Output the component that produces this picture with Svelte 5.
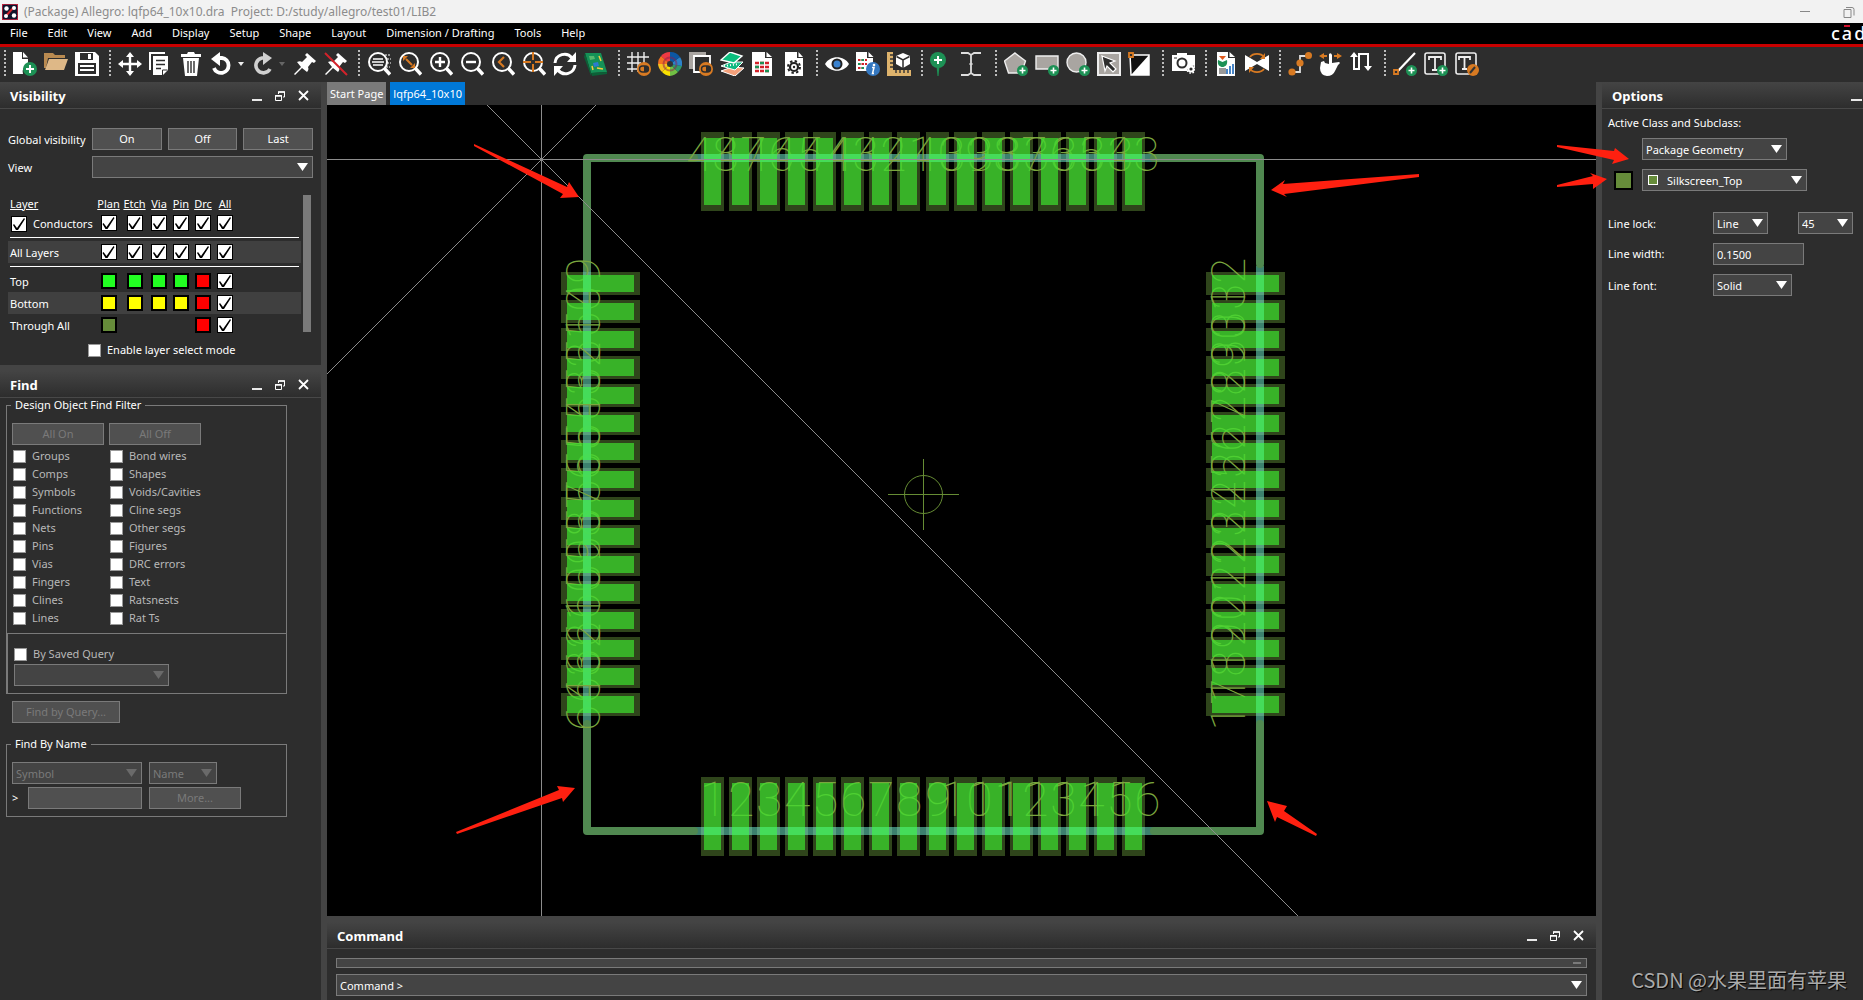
<script lang="ts">
    const menus = ['File', 'Edit', 'View', 'Add', 'Display', 'Setup', 'Shape', 'Layout', 'Dimension / Drafting', 'Tools', 'Help'];

    // shared icon fragments
    const plus = '<circle cx="18.500" cy="18.500" r="5.500" fill="#1d9155"/><path d="M18.500 15.500v6M15.500 18.500h6" stroke="#fff" stroke-width="1.600"/>';
    const lens = '<circle cx="11" cy="10" r="9" fill="none" stroke="#fff" stroke-width="2"/><path d="M17.500 16.500l5.500 6" stroke="#fff" stroke-width="3.400"/>';
    const doc = '<path d="M3 0h12v6h6v18H3z" fill="#fff"/><path d="M16.500 0v5H21z" fill="#fff"/>';
    const pushpin = '<path d="M14 1l9 8-2 2-2-1-4 5c1 2 0 4-1 5l-5-4-7 7-1-1 7-7-4-5c2-1 4-1 5 0l5-5-2-2z" fill="#fff"/>';
    const toggle = '<circle cx="17" cy="17" r="7" fill="#d87a22"/><rect x="12.500" y="14" width="9" height="6" rx="3" fill="none" stroke="#2d2d2d" stroke-width="1.400"/><path d="M17 14h2a3 3 0 0 1 0 6h-2z" fill="#2d2d2d"/>';

    const icons: Record<string, string> = {
        'New': '<path d="M0 0h9v7h6v5a8 8 0 0 0-5 10H0z" fill="#fff"/><path d="M10 0v5.500h5z" fill="#fff"/><circle cx="17" cy="17" r="7" fill="#1d9155"/><path d="M17 13v8M13 17h8" stroke="#fff" stroke-width="2"/>',
        'Open': '<path d="M0 1h9l2 2h10v3H4L2 16H0z" fill="#b98a50"/><path d="M5 7h19l-4 11H1z" fill="#deb887"/>',
        'Save': '<path d="M0 0h20l4 4v20H0z" fill="#fff"/><path d="M5 1h13v7H5z" fill="#2d2d2d"/><path d="M13 2h3v5h-3z" fill="#fff"/><path d="M3 11h18v11H3z" fill="#2d2d2d"/><path d="M5 14h14M5 18h14" stroke="#fff" stroke-width="2"/>',
        'Move': '<path d="M12 2v20M2 12h20" stroke="#fff" stroke-width="2.400"/><path d="M12 0l4 5H8zM12 24l4-5H8zM0 12l5-4v8zM24 12l-5-4v8z" fill="#fff"/>',
        'Copy': '<path d="M1 18V1h15" fill="none" stroke="#fff" stroke-width="2"/><path d="M4 4h15v14l-5 5H4z" fill="#fff"/><path d="M7 8.500h9M7 12.500h9M7 16.500h5" stroke="#2d2d2d" stroke-width="1.600"/><path d="M13.500 23v-5h5" fill="none" stroke="#2d2d2d"/>',
        'Delete': '<path d="M1 2h6l1-2h6l1 2h6v3H1zM3 6h16l-2 18H5z" fill="#fff"/><path d="M8 9v12M11 9v12M14 9v12" stroke="#2d2d2d" stroke-width="1.400"/>',
        'Undo': '<path d="M7 6h4a7.500 7.500 0 1 1-8 10" fill="none" stroke="#fff" stroke-width="3.800"/><path d="M0 7l9-7v14z" fill="#fff"/>',
        'Redo': '<path d="M13 6h-3a7.500 7.500 0 1 0 8 11" fill="none" stroke="#d0d0d0" stroke-width="3.600"/><path d="M20 6l-9-6v13z" fill="#d0d0d0"/>',
        'Fix': pushpin,
        'Unfix': pushpin + '<path d="M1 1l22 22" stroke="#d3222a" stroke-width="2"/>',
        'Zoom Points': lens + '<path d="M6 7h10M5 10h12M6 13h10" stroke="#fff" stroke-width="1.600"/><path d="M18 3h5M20 7h4M20 11h4M19 15h4" stroke="#fff" stroke-dasharray="2 1"/>',
        'Zoom Fit': lens + '<path d="M8 7l6 6" stroke="#d87a22" stroke-width="2"/><path d="M5 4h5l-5 5zM17 16h-5l5-5z" fill="#d87a22"/>',
        'Zoom In': lens + '<path d="M11 5v10M6 10h10" stroke="#fff" stroke-width="2.400"/>',
        'Zoom Out': lens + '<path d="M6 10h10" stroke="#fff" stroke-width="2.400"/>',
        'Zoom Previous': lens + '<path d="M13 5l-5 5 5 5" fill="none" stroke="#d87a22" stroke-width="2.200"/>',
        'Zoom Selection': lens + '<path d="M11 0v8M11 12v8M1 10h8M13 10h8" stroke="#d87a22" stroke-width="2"/>',
        'Redraw': '<path d="M2 11a9.500 9.500 0 0 1 17-5M22 13a9.500 9.500 0 0 1-17 5" fill="none" stroke="#fff" stroke-width="3"/><path d="M23 0v10H14zM1 24V14h9z" fill="#fff"/>',
        '3D Canvas': '<path d="M1 1l16 0 6 19-16 1z" fill="#159157"/><path d="M1 1l6 20v3L0 5zM7 21l16-1v2L8 24z" fill="#0b6137"/><path d="M5 4l5 0 1 3-5 1z" fill="#58b86e"/><path d="M9 11l5-1 1 4-5 1z" fill="#2a7bd0"/><path d="M15 4l2 5M13 16l6 1M8 14l1 4" stroke="#f3cd42" stroke-width="1.500"/>',
        'Grid Toggle': '<path d="M5 0v20M11 0v20M17 0v12M0 5h22M0 11h14M0 17h11" stroke="#eee" stroke-width="1.400"/>' + toggle,
        'Color': [['#f6c01e', 'M12 12L0 12A12 12 0 0 0 4 20z'], ['#f9e100', 'M12 12L4 20A12 12 0 0 0 12 24z'], ['#71bf44', 'M12 12V24A12 12 0 0 0 20 20z'], ['#2d9a6a', 'M12 12L20 20A12 12 0 0 0 24 14z'], ['#2c82c9', 'M12 12L24 14A12 12 0 0 0 22 5z'], ['#0b57a4', 'M12 12L22 5A12 12 0 0 0 12 0z'], ['#ee3a43', 'M12 12V0A12 12 0 0 0 3 4z'], ['#f37021', 'M12 12L3 4A12 12 0 0 0 0 12z']]
            .map(([c, d]) => `<path d="${d}" fill="${c}"/>`).join('') + '<circle cx="12" cy="12" r="6.500" fill="none" stroke="#8a1e50" stroke-opacity=".5" stroke-width="2"/><circle cx="12" cy="12" r="3" fill="#333"/>',
        'Shadow Toggle': '<path d="M0 0h17v4H5v13H0z" fill="#a9a5a1"/><path d="M5 4h16v16H5z" fill="#2d2d2d" stroke="#fff" stroke-width="1.800"/>' + toggle,
        'Layers': '<path d="M1 19l11-4 12 1-9 8z" fill="#f4a07a" stroke="#fff"/><path d="M1 14l10-4 12 0-8 8z" fill="#10b981" stroke="#fff"/><path d="M1 8l9-8 12 4-8 7z" fill="#0bbf7e" stroke="#fff" stroke-width="1.400"/><path d="M4 14l15-2" stroke="#fff" stroke-dasharray="1 2" stroke-width="2"/>',
        'Cross Section': '<path d="M1 0h13v6h7v18H1z" fill="#fff"/><path d="M15.500 0v5H21z" fill="#fff"/><path d="M4 11h14M4 15h14M4 19h14" stroke="#d3222a" stroke-width="2.400" stroke-dasharray="4 1"/><path d="M9 11h4M4 15h4M14 19h4" stroke="#1d9155" stroke-width="2.400"/>',
        'Constraints': doc + '<circle cx="12" cy="15" r="4" fill="none" stroke="#222" stroke-width="2.200"/><circle cx="12" cy="15" r="6" fill="none" stroke="#222" stroke-width="2" stroke-dasharray="2.400 2.300"/><circle cx="12" cy="15" r="1.200" fill="#222"/>',
        'Show Element': '<path d="M0 12C5 3 19 3 24 12 19 21 5 21 0 12z" fill="#fff"/><circle cx="12" cy="12" r="5.500" fill="#222"/><circle cx="12" cy="12" r="3.500" fill="#3a82cf"/>',
        'Reports': '<path d="M0 0h11v6h6v13H0z" fill="#fff"/><path d="M12.500 0v5h5z" fill="#fff"/><path d="M2 8h9M2 12h9M2 16h7" stroke="#d3222a" stroke-width="2.200" stroke-dasharray="2.500 1"/><path d="M5.500 8H8M2 12h2.500M5.500 16H8" stroke="#1d9155" stroke-width="2.200"/><circle cx="17" cy="17" r="7" fill="#3578c0"/><circle cx="18" cy="13" r="1.300" fill="#fff"/><path d="M16 15.500h2l-1.500 6h1.500" fill="none" stroke="#fff" stroke-width="1.500"/>',
        'Measure': '<path d="M0 0h6v18h18v6H0z" fill="#deb36c"/><path d="M3 3h3M3 7h3M3 11h3M3 15h3M9 18v3M13 18v3M17 18v3M21 18v3" stroke="#333" stroke-width="1.400"/><path d="M16 1l7 3v8l-7 4-7-4V4z" fill="#fff"/><path d="M9.500 4.500L16 8l6.500-3.500M16 8v8" fill="none" stroke="#2d2d2d" stroke-width="1.500"/>',
        'Place Manual': '<circle cx="8" cy="8" r="8" fill="#1d9155"/><path d="M6.500 14h3L8.500 24h-1z" fill="#1d9155"/><path d="M8 4v8M4 8h8" stroke="#fff" stroke-width="2"/>',
        'Dimension': '<path d="M0 1h7l3 2 3-2h7M0 23h7l3-2 3 2h7M10 3v18" fill="none" stroke="#ddd" stroke-width="1.800"/><path d="M8 12h4" stroke="#ddd"/>',
        'Shape Polygon': '<path d="M11 1l10.500 8-4 12H4.500L.500 9z" fill="#a9a5a1" stroke="#eee" stroke-width="1.400"/>' + plus,
        'Shape Rectangle': '<path d="M1 4h22v13H1z" fill="#a9a5a1" stroke="#eee" stroke-width="1.400"/>' + plus,
        'Shape Circle': '<circle cx="10.500" cy="10.500" r="9.500" fill="#a9a5a1" stroke="#eee" stroke-width="1.400"/>' + plus,
        'Shape Select': '<path d="M1 1h22v22H1z" fill="#a9a5a1" stroke="#eee" stroke-width="2"/><path d="M5 4l13 5-5 2 6 6-3 3-6-6-2 5z" fill="#2d2d2d" stroke="#fff" stroke-width="1.200"/>',
        'Shape Edit': '<path d="M2 3h19v20H3z" fill="#111" stroke="#fff" stroke-width="1.500"/><path d="M21 3v20H3z" fill="#fff"/><path d="M1 1h4v4H1z" fill="#2d2d2d" stroke="#d87a22" stroke-width="1.800"/>',
        'Snapshot': '<path d="M1 3h5V1h10v2h8v11a6 6 0 0 0-8 5H1z" fill="#fff"/><circle cx="11" cy="11" r="4.500" fill="none" stroke="#2d2d2d" stroke-width="2"/><path d="M3 6h3" stroke="#2d2d2d"/><circle cx="20" cy="17" r="2.600" fill="none" stroke="#fff" stroke-width="2"/><circle cx="20" cy="17" r="4" fill="none" stroke="#fff" stroke-width="1.600" stroke-dasharray="1.600 1.500"/>',
        'Drill Report': '<path d="M3 0h11v6h7v18H3z" fill="#fff"/><path d="M15.500 0v5H21z" fill="#fff"/><path d="M5 4h7l-3.500 4z" fill="#e0581b"/><path d="M4 8l4.500 2L13 8c1 5-2 7-4.500 7S3 13 4 8z" fill="#1d9155"/><path d="M5 16h7v6H5z" fill="#999"/><path d="M13 22v-5M16 22v-8M19 22v-10" stroke="#3578c0" stroke-width="1.800"/>',
        'Mirror': '<path d="M0 3l12 7 12-7v16l-12-7-12 7z" fill="#fff"/><path d="M5 5a8 6 0 0 1 14 0M19 17a8 6 0 0 1-14 0" fill="none" stroke="#d87a22" stroke-width="1.800"/><path d="M20 1v6h-5zM4 21v-6h5z" fill="#d87a22"/>',
        'Add Connect': '<path d="M4 20h8V4h8" fill="none" stroke="#ddd" stroke-width="1.800"/><circle cx="4" cy="20" r="3.600" fill="#d87a22"/><circle cx="12" cy="11" r="3.600" fill="#d87a22"/><circle cx="20.500" cy="3.500" r="3.500" fill="#d87a22"/>',
        'Slide': '<path d="M10 2q2-2 3 1v8l7-1q2 1-1 3l-3 6q-2 5-8 5-7-1-7-8l1-6 3-1 1 2 4 1z" fill="#fff"/><path d="M0 4l5-3v6zM23 4l-5-3v6z" fill="#d87a22"/><path d="M4 4h4M15 4h4" stroke="#d87a22" stroke-width="1.800"/>',
        'Delay Tune': '<path d="M4 3v14h5V2h9v15" fill="none" stroke="#fff" stroke-width="2"/><path d="M4 0l4 5H0zM18 19l4-5h-8z" fill="#fff"/>',
        'Add Line': '<path d="M4 20L22 1" stroke="#fff" stroke-width="2.200"/><path d="M1 18h4v4H1z" fill="#2d2d2d" stroke="#d87a22" stroke-width="1.800"/>' + plus,
        'Add Text': '<rect x="1" y="1" width="20" height="21" rx="2" fill="none" stroke="#eee" stroke-width="1.600"/><path d="M5 8V5h12v3M11 5v13M8 18h6" fill="none" stroke="#eee" stroke-width="1.800"/>' + plus,
        'Edit Text': '<rect x="1" y="1" width="20" height="21" rx="2" fill="none" stroke="#eee" stroke-width="1.600"/><path d="M4 8V5h11v3M9.500 5v12M7 17h5" fill="none" stroke="#eee" stroke-width="1.800"/><circle cx="18" cy="18" r="6" fill="#d87a22"/><path d="M15 21l5-6" stroke="#333" stroke-width="2"/>',
    };

    const toolGroups = [
        ['New', 'Open', 'Save'],
        ['Move', 'Copy', 'Delete', 'Undo', 'Redo', 'Fix', 'Unfix'],
        ['Zoom Points', 'Zoom Fit', 'Zoom In', 'Zoom Out', 'Zoom Previous', 'Zoom Selection', 'Redraw', '3D Canvas'],
        ['Grid Toggle', 'Color', 'Shadow Toggle', 'Layers', 'Cross Section', 'Constraints'],
        ['Show Element', 'Reports', 'Measure'],
        ['Place Manual', 'Dimension'],
        ['Shape Polygon', 'Shape Rectangle', 'Shape Circle', 'Shape Select', 'Shape Edit'],
        ['Snapshot'],
        ['Drill Report', 'Mirror'],
        ['Add Connect', 'Slide', 'Delay Tune'],
        ['Add Line', 'Add Text', 'Edit Text'],
    ];

    const columns = ['Plan', 'Etch', 'Via', 'Pin', 'Drc'];
    const layers = [
        { name: 'Top', colors: ['#22ff22', '#22ff22', '#22ff22', '#22ff22', '#ff0000'] },
        { name: 'Bottom', colors: ['#ffff00', '#ffff00', '#ffff00', '#ffff00', '#ff0000'] },
        { name: 'Through All', colors: ['#668c3a', '', '', '', '#ff0000'] },
    ];

    const filters = [
        'Groups', 'Bond wires', 'Comps', 'Shapes', 'Symbols', 'Voids/Cavities', 'Functions', 'Cline segs', 'Nets', 'Other segs',
        'Pins', 'Figures', 'Vias', 'DRC errors', 'Fingers', 'Text', 'Clines', 'Ratsnests', 'Lines', 'Rat Ts',
    ];

    // LQFP64 footprint, 16 pads on each side
    const pitch = 421 / 15;
    const pads = Array.from({ length: 16 }, (_, i) => {
        const s = Math.round(i * pitch);
        return { s, bottom: i + 1, right: 32 - i, top: 48 - i, left: 49 + i };
    });
</script>

{#snippet windowButtons(title: string)}
    <div class="win-buttons">
        <button aria-label="Minimize {title}"><svg viewBox="0 0 12 12"><path d="M1 9h10v2H1z" fill="#e8e8e8" /></svg></button>
        <button aria-label="Float {title}">
            <svg viewBox="0 0 12 12"><path d="M4.500 4V2h6v5H9M1.500 5.500h6v5h-6z" fill="none" stroke="#fff" stroke-width="1" /><path d="M4 2h7M1 6h7" stroke="#fff" stroke-width="1.500" /></svg>
        </button>
        <button aria-label="Close {title}"><svg viewBox="0 0 12 12"><path d="M2 1l9 9M11 1l-9 9" stroke="#fff" stroke-width="1.800" /></svg></button>
    </div>
{/snippet}

{#snippet combo(label: string, value: string, cls: string, disabled: boolean)}
    <span class="combo {cls}" class:disabled>
        <select aria-label={label} {disabled}><option>{value}</option></select>
    </span>
{/snippet}

<div class="app">
    <header class="titlebar">
        <svg class="app-icon" viewBox="0 0 16 16">
            <rect width="16" height="16" rx="2" fill="#10142c" />
            <path d="M0 14V2q0-2 2-2h12q2 0 2 2v12q0 2-2 2H2q-2 0-2-2z" fill="none" stroke="#c8203c" stroke-width="1.500" />
            <path d="M3 13l9-10" stroke="#d3222a" stroke-width="2" />
            <circle cx="4.500" cy="4.500" r="2.200" fill="#fff" /><circle cx="12" cy="4" r="2" fill="#fff" />
            <circle cx="4" cy="12" r="2" fill="#fff" /><circle cx="12" cy="11.500" r="2.200" fill="#fff" />
        </svg>
        <span class="title">(Package) Allegro: lqfp64_10x10.dra&nbsp; Project: D:/study/allegro/test01/LIB2</span>
        <button aria-label="Minimize"><svg viewBox="0 0 12 12"><path d="M1 5.500h10" stroke="#888" /></svg></button>
        <button aria-label="Restore"><svg viewBox="0 0 12 12"><path d="M1 3.500h7v8H1zM3 1.500h6q2 0 2 2v6" fill="none" stroke="#888" /></svg></button>
    </header>

    <nav class="menubar">
        {#each menus as menu}
            <button>{menu}</button>
        {/each}
        <span class="logo"><span>c</span><span class="macron">a</span><span>d</span></span>
    </nav>

    <div class="toolbar">
        {#each toolGroups as group}
            <div class="group">
                {#each group as name}
                    <button aria-label={name} class:has-menu={name === 'Undo' || name === 'Redo'} class:dim={name === 'Redo'}>
                        <svg viewBox="0 0 24 24">{@html icons[name]}</svg>
                    </button>
                {/each}
            </div>
        {/each}
    </div>

    <main>
        <aside class="dock">
            <section class="visibility">
                <h2>Visibility {@render windowButtons('Visibility')}</h2>
                <div class="form">
                    <span>Global visibility</span>
                    <div class="buttons"><button class="btn">On</button><button class="btn">Off</button><button class="btn">Last</button></div>
                    <span>View</span>
                    {@render combo('View', '', '', false)}
                </div>
                <div class="layer-list">
                    <table>
                        <colgroup><col class="c-name" /><col class="c-plan" /><col class="c-etch" /><col class="c" /><col class="c" /><col class="c" /><col class="c" /><col /></colgroup>
                        <thead>
                            <tr><th class="name">Layer</th>{#each columns as c}<th>{c}</th>{/each}<th>All</th><th></th></tr>
                        </thead>
                        <tbody>
                            <tr>
                                <td class="name"><label><input type="checkbox" class="tick" checked /> Conductors</label></td>
                                {#each [...columns, 'All'] as c}<td><input type="checkbox" class="tick" aria-label="Conductors {c}" checked /></td>{/each}
                                <td></td>
                            </tr>
                            <tr class="rule"><td colspan="8"><hr /></td></tr>
                            <tr class="alt">
                                <td class="name">All Layers</td>
                                {#each [...columns, 'All'] as c}<td><input type="checkbox" class="tick" aria-label="All layers {c}" checked /></td>{/each}
                                <td></td>
                            </tr>
                            <tr class="rule"><td colspan="8"><hr /></td></tr>
                            {#each layers as layer, i}
                                <tr class:alt={i === 1}>
                                    <td class="name">{layer.name}</td>
                                    {#each layer.colors as color, j}
                                        <td>{#if color}<button class="swatch" aria-label="{layer.name} {columns[j]}" style:background={color}></button>{/if}</td>
                                    {/each}
                                    <td><input type="checkbox" class="tick" aria-label="{layer.name} All" checked /></td>
                                    <td></td>
                                </tr>
                            {/each}
                        </tbody>
                    </table>
                    <div class="scrollbar"></div>
                </div>
                <label class="select-mode"><input type="checkbox" class="box" /> Enable layer select mode</label>
            </section>

            <section class="find">
                <h2>Find {@render windowButtons('Find')}</h2>
                <fieldset class="filter">
                    <legend>Design Object Find Filter</legend>
                    <div class="row"><button class="btn wide" disabled>All On</button><button class="btn wide" disabled>All Off</button></div>
                    <div class="checks">
                        {#each filters as f}
                            <label><input type="checkbox" class="box" /> {f}</label>
                        {/each}
                    </div>
                    <div class="saved">
                        <label><input type="checkbox" class="box" /> By Saved Query</label>
                        {@render combo('Saved query', '', 'w155', true)}
                    </div>
                </fieldset>
                <button class="btn query" disabled>Find by Query...</button>
                <fieldset class="by-name">
                    <legend>Find By Name</legend>
                    <div class="row">{@render combo('Object type', 'Symbol', 'w130', true)}{@render combo('Match by', 'Name', 'w68', true)}</div>
                    <div class="row"><label class="prompt" for="find-name">&gt;</label><input id="find-name" type="text" disabled /><button class="btn wide" disabled>More...</button></div>
                </fieldset>
            </section>
        </aside>

        <div class="center">
            <div class="tabs"><button>Start Page</button><button class="active">lqfp64_10x10</button></div>
            <svg class="canvas" viewBox="327 105 1269 811" preserveAspectRatio="xMidYMid slice">
                <!-- outline where it runs under the pads -->
                <path d="M694 158H1154M694 831H1154M587 266V724M1260 266V724" stroke="#3c806e" stroke-width="8" />
                <!-- silkscreen corners -->
                <path d="M587 268V158H694M1154 158H1260V264M1260 724V831H1154M694 831H587V724" class="silk" />
                <!-- solder mask margins -->
                {#each pads as { s }}
                    {#each [132, 777] as y}
                        <rect x={701 + s} {y} width="23" height="79" class="mask" />
                        <rect x={701 + s} y={y === 132 ? 154 : 827} width="23" height="8" class="mask-hit" />
                    {/each}
                    {#each [561, 1206] as x}
                        <rect {x} y={272 + s} width="79" height="23" class="mask" />
                        <rect x={x === 561 ? 583 : 1256} y={272 + s} width="8" height="23" class="mask-hit" />
                    {/each}
                {/each}
                <!-- pin numbers, dimmed by the copper above them -->
                <g class="pins">
                    {#each pads as { s, top, bottom, left, right }}
                        <text x={686 + s} y="171">{top}</text>
                        <text x={(bottom > 9 ? 687 : 700) + s} y="816">{bottom}</text>
                        <text transform="translate(600 {310 + s}) rotate(-90)">{left}</text>
                        <text transform="translate(1245 {310 + s}) rotate(-90)">{right}</text>
                    {/each}
                </g>
                <!-- copper pads -->
                {#each pads as { s }}
                    {#each [138, 783] as y}
                        <rect x={704 + s} {y} width="17" height="67" class="pad" />
                        <rect x={704 + s} y={y === 138 ? 154 : 827} width="17" height="8" class="pad-hit" />
                    {/each}
                    {#each [567, 1212] as x}
                        <rect {x} y={275 + s} width="67" height="17" class="pad" />
                        <rect x={x === 567 ? 583 : 1256} y={275 + s} width="8" height="17" class="pad-hit" />
                    {/each}
                {/each}
                <!-- origin guides -->
                <g class="guides">
                    <path d="M541.500 105V916M327 159.500H1596" />
                    <path d="M487 105L1298 916M596 105L327 374" />
                </g>
                <g class="mark"><circle cx="923.500" cy="494.500" r="19" /><path d="M888 494.500H959M923.500 459V530" /></g>
                <g class="arrow">
                    <path d="M474 144L567 187 569 182 579 197 560 198 563 194 474 146z" />
                    <path d="M1271 190L1285 180 1283 184 1419 174 1419 177 1284 194 1287 197z" />
                    <path d="M575 788L557 786 559 790 456 832 457 834 562 798 563 802z" />
                    <path d="M1267 801L1287 806 1284 811 1317 834 1316 836 1277 817 1275 822z" />
                </g>
            </svg>
            <section class="command">
                <h2>Command {@render windowButtons('Command')}</h2>
                <div class="log"></div>
                {@render combo('Command line', 'Command >', '', false)}
            </section>
        </div>

        <aside class="options">
            <h2>Options <button class="min" aria-label="Minimize Options"><svg viewBox="0 0 12 12"><path d="M0 9h11v2H0z" fill="#e8e8e8" /></svg></button></h2>
            <p>Active Class and Subclass:</p>
            <div class="class-row">{@render combo('Active class', 'Package Geometry', 'w145', false)}</div>
            <div class="class-row">
                <button class="swatch big" aria-label="Subclass color"></button>
                {@render combo('Active subclass', 'Silkscreen_Top', 'w165 with-chip', false)}
            </div>
            <div class="line-form">
                <span>Line lock:</span>
                <div class="pair">{@render combo('Line lock', 'Line', 'w55', false)}{@render combo('Lock angle', '45', 'w55', false)}</div>
                <label for="line-width">Line width:</label>
                <input id="line-width" type="text" value="0.1500" />
                <span>Line font:</span>
                {@render combo('Line font', 'Solid', 'w79', false)}
            </div>
            <svg class="notes arrow" viewBox="0 0 80 50">
                <path d="M1 5L58 11 59 8 73 19 56 24 58 20 1 7z" />
                <path d="M1 45L37 36 34 33 51 39 37 49 37 44 1 47z" />
            </svg>
        </aside>
    </main>

    <div class="watermark">CSDN @水果里面有苹果</div>
</div>

<style>
    :global(body) {
        margin: 0;
        background: #2d2d2d;
    }

    .app {
        position: relative;
        display: flex;
        flex-direction: column;
        height: 100vh;
        overflow: hidden;
        background: #2d2d2d;
        color: #fff;
        font: 11px/16px "Noto Sans", "Open Sans", sans-serif;
    }

    button, select, input {
        box-sizing: border-box;
        margin: 0;
        padding: 0;
        border: 0;
        border-radius: 0;
        background: none;
        color: inherit;
        font: inherit;
        appearance: none;
    }

    svg {
        display: block;
    }

    .titlebar {
        flex: none;
        display: flex;
        align-items: center;
        height: 23px;
        padding: 0 8px 0 2px;
        background: #f2f2f2;
        color: #8c8c8c;
        font-size: 12px;
    }

    .titlebar .title {
        flex: 1;
        margin-left: 6px;
    }

    .titlebar svg {
        width: 12px;
        height: 12px;
    }

    .titlebar .app-icon {
        width: 16px;
        height: 16px;
    }

    .titlebar button + button {
        margin-left: 32px;
    }

    .menubar {
        flex: none;
        display: flex;
        align-items: center;
        height: 21px;
        background: #000;
        border-bottom: 3px solid #c80000;
    }

    .menubar button {
        height: 21px;
        padding: 0 10px 1px;
    }

    .logo {
        display: flex;
        gap: 2px;
        width: 32px;
        margin-left: auto;
        overflow: hidden;
        font-size: 18px;
        font-weight: 500;
        line-height: 21px;
    }

    .macron {
        position: relative;
    }

    .macron::before {
        content: "";
        position: absolute;
        left: 2px;
        top: 2px;
        width: 6px;
        height: 2px;
        background: #d0102c;
    }

    .toolbar {
        flex: none;
        display: flex;
        height: 35px;
        padding-left: 1px;
    }

    .group {
        display: flex;
        align-items: flex-start;
        padding-top: 5px;
    }

    .group::before {
        content: "";
        width: 2px;
        height: 26px;
        margin: -2px 7px 0 3px;
        background: repeating-linear-gradient(#bbb 0 2px, transparent 2px 4px);
    }

    .group button {
        display: flex;
        align-items: center;
        width: 31px;
    }

    .group svg {
        flex: none;
        width: 24px;
        height: 24px;
    }

    .group .has-menu {
        width: 41px;
    }

    .has-menu::after {
        content: "";
        margin-left: 3px;
        border: 3px solid transparent;
        border-top: 4px solid #eee;
        border-bottom: 0;
    }

    .has-menu.dim::after {
        border-top-color: #666;
    }

    main {
        flex: 1;
        min-height: 0;
        display: grid;
        grid-template-columns: 327px minmax(0, 1fr) 267px;
    }

    h2 {
        display: flex;
        align-items: center;
        justify-content: space-between;
        box-sizing: border-box;
        height: 27px;
        margin: 0;
        padding: 2px 12px 0 10px;
        background: linear-gradient(#444, #2d2d2d);
        border-bottom: 1px solid #484848;
        font-size: 13px;
        font-weight: 700;
    }

    .win-buttons {
        display: flex;
        gap: 11px;
    }

    .win-buttons svg, .min svg {
        width: 12px;
        height: 12px;
    }

    .dock {
        display: flex;
        flex-direction: column;
        border-right: 6px solid #444;
    }

    .btn {
        height: 22px;
        background: #505050;
        border: 1px solid #7a7a7a;
    }

    .btn:disabled {
        color: #7a7a7a;
    }

    .btn.wide {
        width: 92px;
    }

    .combo {
        position: relative;
        display: block;
        height: 22px;
    }

    .combo select {
        display: block;
        width: 100%;
        height: 22px;
        padding: 1px 20px 0 3px;
        background: #444;
        border: 1px solid #7a7a7a;
        opacity: 1;
    }

    .combo::after {
        content: "";
        position: absolute;
        right: 5px;
        top: 7px;
        width: 11px;
        height: 8px;
        background: #fff;
        clip-path: polygon(0 0, 100% 0, 50% 100%);
        pointer-events: none;
    }

    .combo.disabled {
        color: #7a7a7a;
    }

    .combo.disabled::after {
        background: #6a6a6a;
    }

    .w55 { width: 55px; }
    .w68 { width: 68px; }
    .w79 { width: 79px; }
    .w130 { width: 130px; }
    .w145 { width: 145px; }
    .w155 { width: 155px; }
    .w165 { width: 165px; }

    .box {
        width: 13px;
        height: 13px;
        background: #fff;
        border: 1px solid #999;
    }

    .tick {
        display: block;
        width: 16px;
        height: 16px;
        margin: 0 auto;
        background: #fff;
        border: 1px solid #000;
    }

    .tick:checked::after {
        content: "";
        display: block;
        width: 14px;
        height: 14px;
        background: #000;
        clip-path: polygon(1px 8px, 2px 7px, 5px 11px, 12px 1px, 13px 2px, 6px 13px, 4px 13px);
    }

    .swatch {
        display: block;
        width: 16px;
        height: 16px;
        margin: 0 auto;
        border: 2px solid #000;
    }

    .visibility {
        box-sizing: border-box;
        height: 283px;
    }

    .form {
        display: grid;
        grid-template-columns: 84px 221px;
        gap: 6px 0;
        align-items: center;
        padding: 19px 8px 0;
    }

    .form > span:not(.combo), .line-form > span:not(.combo) {
        padding-top: 2px;
    }

    .buttons {
        display: grid;
        grid-template-columns: repeat(3, 1fr);
        gap: 6px;
    }

    .layer-list {
        display: flex;
        gap: 2px;
        height: 141px;
        margin-top: 17px;
        padding-left: 8px;
        overflow: hidden;
    }

    table {
        width: 293px;
        table-layout: fixed;
        border-collapse: collapse;
    }

    .c-name { width: 88px; }
    .c-plan { width: 25px; }
    .c-etch { width: 27px; }
    .c { width: 22px; }

    th, td {
        height: 22px;
        padding: 0;
        text-align: center;
        white-space: nowrap;
    }

    th {
        height: 17px;
        font-weight: 400;
        text-decoration: underline;
    }

    th.name, td.name {
        padding-left: 2px;
        text-align: left;
    }

    td.name {
        padding-top: 2px;
        height: 20px;
    }

    td.name label {
        display: flex;
        align-items: center;
        gap: 6px;
        height: 16px;
        padding-left: 1px;
    }

    td.name .tick {
        margin: 0;
    }

    .rule td {
        height: 7px;
    }

    hr {
        height: 1px;
        margin: 0 2px;
        border: 0;
        background: #fff;
    }

    .alt {
        background: #404040;
    }

    .scrollbar {
        width: 8px;
        height: 137px;
        background: #7a7a7a;
    }

    .select-mode {
        display: flex;
        align-items: center;
        gap: 6px;
        padding: 6px 0 0 88px;
    }

    .find {
        flex: 1;
        border-top: 6px solid #444;
    }

    fieldset {
        box-sizing: border-box;
        width: 281px;
        min-width: 0;
        margin: 0 0 0 6px;
        padding: 0 5px;
        border: 1px solid #7a7a7a;
    }

    .filter {
        margin-top: -1px;
    }

    legend {
        margin-left: -1px;
        padding: 0 4px;
    }

    .row {
        display: flex;
        gap: 5px;
    }

    .filter .row {
        padding-top: 10px;
    }

    .checks {
        display: grid;
        grid-template-columns: 97px 1fr;
        grid-auto-rows: 18px;
        margin: 2px 0 6px 1px;
        color: #b8b8b8;
    }

    .checks label, .saved label {
        display: flex;
        align-items: center;
        gap: 6px;
    }

    .saved {
        margin: 0 -5px;
        padding: 12px 6px 7px;
        border-top: 1px solid #7a7a7a;
        border-left: 1px solid #7a7a7a;
        color: #b8b8b8;
    }

    .saved .combo {
        margin-top: 2px;
    }

    .query {
        display: block;
        width: 108px;
        margin: 7px 0 13px 12px;
    }

    .by-name .row {
        gap: 7px;
        padding-top: 10px;
    }

    .by-name .row + .row {
        padding: 3px 0 7px;
    }

    .prompt {
        width: 9px;
        line-height: 22px;
    }

    .by-name input {
        width: 114px;
        height: 22px;
        background: #505050;
        border: 1px solid #7a7a7a;
    }

    .center {
        display: flex;
        flex-direction: column;
        min-height: 0;
    }

    .tabs {
        display: flex;
        gap: 4px;
        height: 23px;
    }

    .tabs button {
        padding: 0 3px;
        background: #7a7a7a;
    }

    .tabs .active {
        background: #0078d7;
    }

    .canvas {
        flex: 1;
        min-height: 0;
        width: 100%;
        background: #000;
    }

    .mask { fill: #2f451b; }
    .mask-hit { fill: #58a080; }

    .pad {
        fill: #3ce12d;
        fill-opacity: .7;
    }

    .pad-hit {
        fill: #46e05f;
        fill-opacity: .8;
    }

    .silk {
        fill: none;
        stroke: #508850;
        stroke-width: 8px;
        stroke-linecap: round;
        stroke-linejoin: round;
    }

    .pins {
        fill: #7aa63e;
        font: 100 48px Roboto, Lato, sans-serif;
    }

    .guides {
        stroke: #8c8c8c;
    }

    .mark {
        fill: none;
        stroke: #668c34;
    }

    .arrow {
        fill: #ff2010;
    }

    .command {
        flex: none;
        height: 78px;
        border-top: 6px solid #444;
    }

    .log {
        display: flex;
        justify-content: flex-end;
        align-items: center;
        box-sizing: border-box;
        height: 10px;
        margin: 9px 9px 6px;
        padding-right: 5px;
        background: #444;
        border: 1px solid #7a7a7a;
    }

    .log::after {
        content: "";
        width: 8px;
        height: 2px;
        background: #7a7a7a;
    }

    .command .combo {
        margin: 0 9px;
    }

    .options {
        position: relative;
        border-left: 6px solid #444;
    }

    .options h2 {
        padding-right: 0;
    }

    .options p {
        margin: 6px 6px 7px;
    }

    .class-row {
        display: flex;
        align-items: center;
        gap: 9px;
        height: 22px;
        margin-bottom: 9px;
        padding-left: 12px;
    }

    .class-row .combo:first-child {
        margin-left: 28px;
    }

    .swatch.big {
        width: 19px;
        height: 19px;
        margin: 0;
        background: #668c3a;
    }

    .with-chip select {
        padding-left: 24px;
    }

    .with-chip::before {
        content: "";
        position: absolute;
        left: 6px;
        top: 6px;
        width: 8px;
        height: 8px;
        background: #668c3a;
        border: 1px solid #fff;
    }

    .line-form {
        display: grid;
        grid-template-columns: 105px 1fr;
        grid-auto-rows: 22px;
        gap: 9px 0;
        align-items: center;
        margin-top: 21px;
        padding: 0 10px 0 6px;
    }

    .pair {
        display: flex;
        justify-content: space-between;
    }

    .line-form input {
        width: 91px;
        height: 22px;
        padding-left: 3px;
        background: #444;
        border: 1px solid #7a7a7a;
    }

    .notes {
        position: absolute;
        left: -46px;
        top: 58px;
        width: 80px;
        height: 50px;
    }

    .watermark {
        position: absolute;
        right: 16px;
        bottom: 5px;
        color: #aaa;
        font: 20px/30px "Noto Sans CJK SC", sans-serif;
        text-shadow: 1px 1px 1px #000;
    }
</style>
